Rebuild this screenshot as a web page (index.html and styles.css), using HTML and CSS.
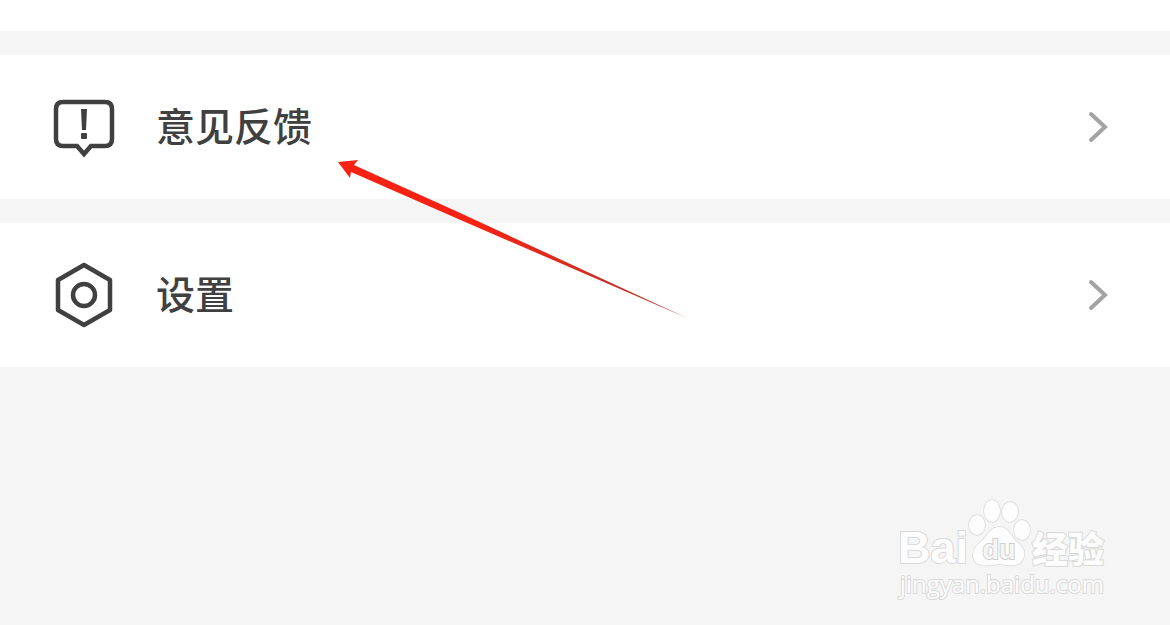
FILE: index.html
```html
<!DOCTYPE html>
<html lang="zh-CN">

<head>
    <meta charset="UTF-8">
    <meta name="viewport" content="width=device-width, initial-scale=1.0">
    <title>意见反馈</title>
    <link rel="stylesheet" href="styles.css">
</head>

<body>
    <nav class="menu">
        <div class="menu-top"></div>

        <a class="menu-item" href="#feedback">
            <svg class="icon" viewBox="0 0 64 68" aria-hidden="true">
                <path d="M11 9H53Q60 9 60 16V46Q60 53 53 53H39L32 61L25 53H11Q4 53 4 46V16Q4 9 11 9Z" fill="none" stroke="#404040" stroke-width="4.500" />
                <path d="M29 16H35L34 37H30Z" fill="#404040" />
                <rect x="29" y="40" width="6" height="6" rx="1" fill="#404040" />
            </svg>
            <span class="label">意见反馈</span>
            <svg class="chevron" viewBox="0 0 20 32" aria-hidden="true">
                <path d="M3 3L17 16L3 29" />
            </svg>
        </a>

        <a class="menu-item" href="#settings">
            <svg class="icon" viewBox="0 0 64 68" aria-hidden="true">
                <path d="M32 4L58 19V49L32 64L6 49V19Z" fill="none" stroke="#404040" stroke-width="4.500" stroke-linejoin="round" />
                <circle cx="32" cy="34" r="11" fill="none" stroke="#404040" stroke-width="4.500" />
            </svg>
            <span class="label">设置</span>
            <svg class="chevron" viewBox="0 0 20 32" aria-hidden="true">
                <path d="M3 3L17 16L3 29" />
            </svg>
        </a>
    </nav>

    <!-- Arrow pointing at the feedback entry -->
    <svg class="arrow" viewBox="0 0 350 160" aria-hidden="true">
        <defs>
            <linearGradient id="arrowFill" x1="0" y1="0" x2="1" y2="0">
                <stop offset="0.4" stop-color="#f62314" />
                <stop offset="1" stop-color="#b03a30" />
            </linearGradient>
        </defs>
        <path d="M0 2L20 0L16 5L120 52L349 158L118 58L13 12L12 18Z" fill="url(#arrowFill)" />
    </svg>

    <!-- Watermark -->
    <div class="watermark">
        <div class="brand">
            <span class="brand-bai">Bai</span>
            <svg class="paw" viewBox="0 0 66 70" aria-hidden="true">
                <g fill="#fdfdfd" stroke="#d9d9d9" stroke-width="1.500">
                    <ellipse cx="11" cy="26" rx="8" ry="10" />
                    <ellipse cx="26" cy="12" rx="8" ry="11" />
                    <ellipse cx="44" cy="13" rx="8" ry="10" transform="rotate(8 44 13)" />
                    <ellipse cx="56" cy="31" rx="8" ry="10" />
                    <path d="M33 28C41 27 45 36 50 42C56 47 61 52 57 60C54 68 44 67 33 65C22 67 12 68 8 61C5 53 9 47 16 42C21 37 24 28 33 28Z" />
                </g>
                <text x="33" y="60" text-anchor="middle" class="paw-text">du</text>
            </svg>
            <span class="brand-cn">经验</span>
        </div>
        <div class="site">jingyan.baidu.com</div>
    </div>
</body>

</html>
```

FILE: styles.css
```css
body {
    margin: 0;
    min-height: 100vh;
    position: relative;
    overflow: hidden;
    background-color: #f5f5f5;
    color: #404040;
    font-family: "Noto Sans CJK SC", sans-serif;
}

.menu {
    display: flex;
    flex-direction: column;
    gap: 24px;
}

.menu-top {
    height: 31px;
    background-color: #fff;
}

.menu-item {
    display: flex;
    align-items: center;
    padding: 38px 62px 38px 52px;
    background-color: #fff;
    color: inherit;
    text-decoration: none;
}

.icon {
    width: 64px;
    height: 68px;
}

.label {
    flex: 1;
    margin-left: 40px;
    padding-bottom: 6px;
    font-size: 39px;
    line-height: 60px;
    font-weight: 500;
}

.chevron {
    width: 20px;
    height: 32px;
    fill: none;
    stroke: #a3a3a3;
    stroke-width: 4;
    stroke-linecap: round;
}

.arrow {
    position: absolute;
    left: 338px;
    top: 160px;
    width: 350px;
    height: 160px;
}

.watermark {
    position: absolute;
    right: 66px;
    bottom: 26px;
    color: #fdfdfd;
    text-align: right;
    -webkit-text-stroke: 2px #d9d9d9;
    paint-order: stroke fill;
}

.brand {
    display: flex;
    align-items: flex-end;
    justify-content: flex-end;
}

.brand-bai {
    font: bold 45px/42px "Liberation Sans", sans-serif;
}

.paw {
    width: 66px;
    height: 70px;
    margin-left: -2px;
}

.paw-text {
    font: bold 27px "Liberation Sans", sans-serif;
    fill: #f5f5f5;
    stroke: #d0d0d0;
    stroke-width: 2px;
    -webkit-text-stroke: 0;
}

.brand-cn {
    font-size: 36px;
    line-height: 44px;
    font-weight: 900;
}

.site {
    font: 24px/30px "Open Sans", sans-serif;
}
```
